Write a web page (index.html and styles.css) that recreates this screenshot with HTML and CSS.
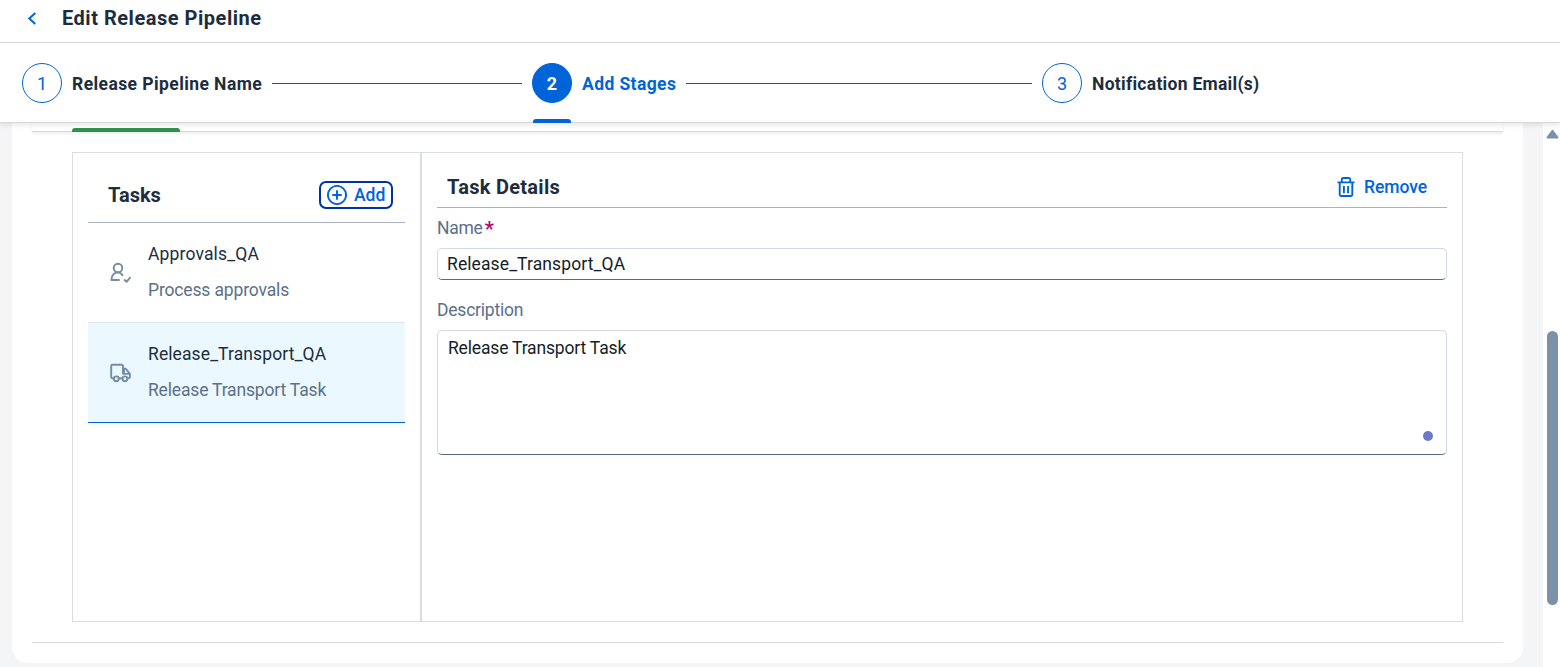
FILE: index.html
```html
<!DOCTYPE html>
<html lang="en">
<head>
<meta charset="utf-8">
<title>Edit Release Pipeline</title>
<link rel="stylesheet" href="styles.css">
</head>
<body>
<header class="page-header">
  <svg class="back" width="10" height="14" viewBox="0 0 10 14"><path d="M8.300 0.900 2.300 6.500l6 5.600"/></svg>
  <h1><span class="t-page">Edit Release Pipeline</span></h1>
</header>
<nav class="wizard">
  <div class="step step-one"><span class="circle">1</span><span class="label t-s1">Release Pipeline Name</span><i class="line"></i></div>
  <div class="step step-two active"><span class="circle">2</span><span class="label t-s2">Add Stages</span><i class="line"></i></div>
  <div class="step"><span class="circle">3</span><span class="label t-s3">Notification Email(s)</span></div>
</nav>
<div class="viewport">
  <main class="card">
    <div class="tabstrip"><i class="tab-marker"></i></div>
    <div class="split">
      <section class="tasks">
        <div class="tasks-head">
          <h2><span class="t-tasks">Tasks</span></h2>
          <button class="add"><svg width="20" height="20" viewBox="0 0 20 20"><circle cx="10" cy="10" r="9.1"/><path d="M10 5.300v9.400M5.300 10h9.400"/></svg><span class="t-add">Add</span></button>
        </div>
        <ul>
          <li>
            <svg class="task-icon" width="24" height="24" viewBox="0 0 24 24"><circle cx="10" cy="7" r="4.300"/><path d="M14.800 14.900c-1.100-2.100-2.700-3.500-4.800-3.500-3.700 0-6.600 3-6.600 7.600h8.300M16.200 18.500l2.300 2.300 4-4.600"/></svg>
            <div class="task-text"><span class="name t-appr">Approvals_QA</span><span class="desc t-proc">Process approvals</span></div>
          </li>
          <li class="selected">
            <svg class="task-icon" width="24" height="24" viewBox="0 0 24 24"><path d="M5.800 17.200H4.400A1.200 1.200 0 0 1 3.200 16V5A1.200 1.200 0 0 1 4.400 3.800h9.400A1.200 1.200 0 0 1 15 5v8.400M10.800 17.200h3.400M15 7.600h2.600l4.300 5.300V16a1.200 1.200 0 0 1-1.200 1.200h-1M16 7.900v5h5.700"/><circle cx="8.300" cy="17.800" r="2.400"/><circle cx="16.900" cy="17.800" r="2.400"/></svg>
            <div class="task-text"><span class="name t-rel">Release_Transport_QA</span><span class="desc t-rtt">Release Transport Task</span></div>
          </li>
        </ul>
      </section>
      <section class="details">
        <div class="details-head">
          <h2><span class="t-det">Task Details</span></h2>
          <button class="remove"><svg width="18" height="20" viewBox="0 0 18 20"><path d="M.500 5.400h17M2.700 5.400v12.100A1.500 1.500 0 0 0 4.200 19h9.600a1.500 1.500 0 0 0 1.500-1.500V5.400M4.800 5V2.500A1.500 1.500 0 0 1 6.300 1h5.400a1.500 1.500 0 0 1 1.500 1.500V5M6.900 9v7.300M11.100 9v7.300"/></svg><span class="t-rem">Remove</span></button>
        </div>
        <div class="field-label name-label"><span class="t-name">Name</span><b>*</b></div>
        <div class="input"><span class="t-in">Release_Transport_QA</span></div>
        <div class="field-label desc-label"><span class="t-desc">Description</span></div>
        <div class="textarea"><span class="t-ta">Release Transport Task</span><i class="dot"></i></div>
      </section>
    </div>
    <div class="bottom-rule"></div>
  </main>
  <aside class="scrollbar">
    <svg class="arrow" width="13" height="10" viewBox="0 0 13 10"><path d="M1.500 8.500 6.500 1.800l5 6.700z"/></svg>
    <i class="thumb"></i>
  </aside>
</div>
</body>
</html>
```
FILE: styles.css
```css
* { box-sizing: border-box; }
body { margin: 0; height: 667px; overflow: hidden; display: flex; flex-direction: column; background: #fff; color: #1d2d3e; font: 17.5px/24px Roboto, "Liberation Sans", sans-serif; }
h1, h2, ul { margin: 0; padding: 0; list-style: none; }
h1, h2 { font-size: 20px; line-height: 24px; font-weight: 700; }
span { white-space: nowrap; }
svg { fill: none; stroke: currentColor; stroke-width: 2; flex: none; }
button { display: flex; align-items: center; font: inherit; font-weight: 500; color: #0064d9; background: none; border: 0; padding: 0; }

.page-header { height: 43px; flex: none; border-bottom: 1px solid #d9d9d9; display: flex; padding: 6px 0 0 27px; }
.back { color: #0064d9; margin-top: 6px; }
.page-header h1 { margin-left: 25px; }

.wizard { height: 80px; flex: none; border-bottom: 1px solid #d9d9d9; box-shadow: 0 2px 5px rgba(34, 53, 72, .12); display: flex; padding: 20px 0 0 22px; position: relative; z-index: 1; background: #fff; }
.step { display: flex; align-items: center; height: 40px; width: 510px; position: relative; }
.circle { width: 40px; height: 40px; flex: none; border: 1px solid #0064d9; border-radius: 50%; color: #0064d9; text-align: center; line-height: 40px; font-size: 18px; }
.label { margin-left: 10px; padding-top: 2px; font-weight: 700; }
.line { flex: 1; height: 1px; background: #0a57b0; margin: 0 10px; }
.active .circle { background: #0064d9; color: #fff; font-weight: 700; }
.active .label { color: #0064d9; }
.active::after { content: ""; position: absolute; left: 1px; top: 56px; width: 38px; height: 4px; background: #0064d9; border-radius: 3px 3px 0 0; }

.viewport { flex: 1; min-height: 0; background: #f4f5f7; display: flex; justify-content: space-between; padding-left: 12px; }
.card { width: 1511px; height: 540px; background: #fff; border-radius: 0 0 16px 16px; padding: 0 20px; }
.tabstrip { height: 9px; border-bottom: 1px solid #d9d9d9; box-shadow: 0 2px 3px rgba(34, 53, 72, .08); padding: 5px 0 0 40px; }
.tab-marker { display: block; width: 108px; height: 4px; background: #30914c; border-radius: 3px 3px 0 0; }
.split { display: flex; width: 1391px; height: 470px; margin: 20px 0 0 40px; border: 1px solid #d9dce1; }
.tasks { width: 349px; border-right: 2px solid #d9dce1; padding: 0 15px; }
.tasks-head { height: 70px; border-bottom: 1px solid #a8b3bf; display: flex; justify-content: space-between; align-items: flex-start; padding: 28px 12px 0 20px; }
.tasks-head h2 { margin-top: 2px; }
.add { width: 74px; height: 28px; border: 2px solid #0032a5; border-radius: 7px; padding-left: 5.5px; }
.add svg, .remove svg { stroke-width: 1.9; }
.add span { margin-left: 7.5px; }
li { height: 100px; border-bottom: 1px solid #e1e3e6; display: flex; padding: 19px 0 0 20px; }
li.selected { background: #ebf8ff; border-bottom-color: #0064d9; }
.task-icon { color: #758ca4; margin-top: 19px; stroke-width: 1.9; stroke-linejoin: round; }
.task-text { display: flex; flex-direction: column; gap: 12px; margin-left: 16px; }
.desc, .field-label { color: #5b7088; }

.details { flex: 1; padding: 0 15px; }
.details-head { height: 55px; border-bottom: 1px solid #a8b3bf; display: flex; justify-content: space-between; padding: 22px 20px 0 10px; }
.remove { height: 24px; }
.remove span { margin-left: 8.5px; }
.name-label { margin-top: 8px; }
.name-label b { color: #ba066c; margin-left: 2px; font-size: 20px; line-height: 26px; }
.field-label { height: 24px; display: flex; }
.input, .textarea { border: 1px solid #d3d9e0; border-bottom-color: #556b82; border-radius: 5px; color: #131e29; }
.input { height: 32px; margin-top: 8px; padding: 3px 9px; }
.desc-label { margin-top: 18px; }
.textarea { height: 125px; margin-top: 8px; padding: 5px 10px; position: relative; }
.dot { position: absolute; right: 13px; bottom: 13px; width: 10px; height: 10px; border-radius: 50%; background: #6c79c8; }
.bottom-rule { height: 1px; background: #d9d9d9; margin-top: 20px; }

.scrollbar { width: 17px; background: #fff; padding: 6px 0 0 3px; }
.arrow { display: block; fill: #7b91a8; stroke: #7b91a8; stroke-linejoin: round; }
.thumb { display: block; width: 11px; height: 274px; margin: 192px 0 0 1px; border-radius: 6px; background: #7b91a8; }

.t-page { letter-spacing: .52px; }
.t-s1 { letter-spacing: .42px; }
.t-s2 { letter-spacing: .4px; }
.t-s3 { letter-spacing: .28px; }
.t-det { letter-spacing: .28px; }
.t-appr { letter-spacing: .15px; }
.t-proc { letter-spacing: -.15px; }
.t-rel, .t-in { letter-spacing: .1px; }
.t-rtt, .t-ta { letter-spacing: -.17px; }
.t-desc { letter-spacing: -.22px; }
.t-name { letter-spacing: -.25px; }
.t-rem { letter-spacing: -.05px; }
```
